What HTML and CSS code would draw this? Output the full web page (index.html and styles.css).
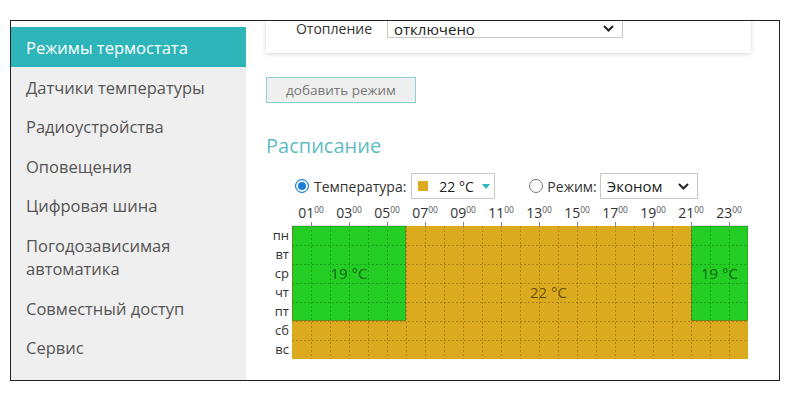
FILE: index.html
```html
<!DOCTYPE html>
<html lang="ru">
<head>
<meta charset="utf-8">
<title>Режимы термостата</title>
<link rel="stylesheet" href="styles.css">
</head>
<body>
<div class="frame">
  <nav class="sidebar">
    <ul class="menu">
      <li class="item active">Режимы термостата</li>
      <li class="item">Датчики температуры</li>
      <li class="item">Радиоустройства</li>
      <li class="item">Оповещения</li>
      <li class="item">Цифровая шина</li>
      <li class="item">Погодозависимая автоматика</li>
      <li class="item">Совместный доступ</li>
      <li class="item">Сервис</li>
    </ul>
  </nav>
  <main class="main">
    <section class="card">
      <span class="field-label">Отопление</span>
      <div class="select select-wide">
        <span>отключено</span>
        <svg class="chev" width="11" height="7" viewBox="0 0 11 7"><path d="M1 1l4.5 4.5L10 1" fill="none" stroke="#222" stroke-width="2"/></svg>
      </div>
    </section>
    <button class="btn" type="button">добавить режим</button>
    <h2 class="title">Расписание</h2>
    <div class="controls">
      <label class="opt"><span class="radio checked"></span>Температура:</label>
      <div class="select select-temp">
        <span class="swatch"></span><span>22 °C</span><span class="caret"></span>
      </div>
      <label class="opt"><span class="radio"></span>Режим:</label>
      <div class="select select-mode">
        <span>Эконом</span>
        <svg class="chev" width="11" height="7" viewBox="0 0 11 7"><path d="M1 1l4.5 4.5L10 1" fill="none" stroke="#222" stroke-width="2"/></svg>
      </div>
    </div>
    <div class="schedule">
      <div class="hours">
        <span class="hour">01<sup>00</sup></span>
        <span class="hour">03<sup>00</sup></span>
        <span class="hour">05<sup>00</sup></span>
        <span class="hour">07<sup>00</sup></span>
        <span class="hour">09<sup>00</sup></span>
        <span class="hour">11<sup>00</sup></span>
        <span class="hour">13<sup>00</sup></span>
        <span class="hour">15<sup>00</sup></span>
        <span class="hour">17<sup>00</sup></span>
        <span class="hour">19<sup>00</sup></span>
        <span class="hour">21<sup>00</sup></span>
        <span class="hour">23<sup>00</sup></span>
      </div>
      <div class="days">
        <span class="day">пн</span>
        <span class="day">вт</span>
        <span class="day">ср</span>
        <span class="day">чт</span>
        <span class="day">пт</span>
        <span class="day">сб</span>
        <span class="day">вс</span>
      </div>
      <svg class="chart" width="456" height="137" viewBox="0 0 456 137">
        <rect x="0" y="4" width="456" height="133" fill="#dbaa1e"/>
        <rect x="0.5" y="4" width="113" height="94.5" fill="#24cd24" stroke="rgba(0,0,0,0.25)"/>
        <rect x="399.5" y="4" width="56.5" height="94.5" fill="#24cd24" stroke="rgba(0,0,0,0.25)"/>
        <path d="M19.5 4V137M38.5 4V137M57.5 4V137M76.5 4V137M95.5 4V137M114.5 4V137M133.5 4V137M152.5 4V137M171.5 4V137M190.5 4V137M209.5 4V137M228.5 4V137M247.5 4V137M266.5 4V137M285.5 4V137M304.5 4V137M323.5 4V137M342.5 4V137M361.5 4V137M380.5 4V137M399.5 4V137M418.5 4V137M437.5 4V137" stroke="rgba(0,0,0,0.22)" stroke-dasharray="2 2" fill="none"/>
        <path d="M0 23.5H456M0 42.5H456M0 61.5H456M0 80.5H456M0 99.5H456M0 118.5H456" stroke="rgba(0,0,0,0.22)" stroke-dasharray="2 2" fill="none"/>
        <path d="M19.5 0V6M57.5 0V6M95.5 0V6M133.5 0V6M171.5 0V6M209.5 0V6M247.5 0V6M285.5 0V6M323.5 0V6M361.5 0V6M399.5 0V6M437.5 0V6" stroke="#888" fill="none"/>
        <text class="cell-text" x="57" y="57">19 °C</text>
        <text class="cell-text" x="256.5" y="76">22 °C</text>
        <text class="cell-text" x="427.5" y="57">19 °C</text>
      </svg>
    </div>
  </main>
</div>
</body>
</html>
```

FILE: styles.css
```css
* { box-sizing: border-box; }

body {
  margin: 0;
  background: #fff;
  font-family: "Open Sans", "Noto Sans", sans-serif;
}

.frame {
  margin: 20px 0 0 10px;
  width: 770px;
  height: 361px;
  border: 1px solid #222;
  display: flex;
  overflow: hidden;
  background: #fff;
}

.sidebar {
  flex: none;
  width: 235px;
  margin-top: 6px;
  background: #efefef;
}

.menu {
  list-style: none;
  margin: 0;
  padding: 0;
}

.item {
  padding: 9px 10px 7px 15px;
  font-size: 16.5px;
  line-height: 23.5px;
  color: #555;
}

.item.active {
  background: #2db5b9;
  color: #fff;
}

.main {
  flex: 1;
  min-width: 0;
  padding-left: 20px;
}

.card {
  margin-top: -21px;
  width: 485px;
  padding: 14px 0 15px;
  background: #fff;
  box-shadow: 0 1px 4px rgba(0, 0, 0, 0.18);
  display: flex;
  align-items: flex-end;
}

.field-label {
  width: 106px;
  margin-right: 15px;
  padding-bottom: 2px;
  text-align: right;
  font-size: 14px;
  line-height: 14px;
  color: #333;
}

.select {
  display: flex;
  align-items: center;
  height: 26px;
  border: 1px solid #c8c8c8;
  background: #fff;
  font-size: 15px;
  color: #222;
  padding: 0 8px 0 6px;
}

.select-wide {
  width: 236px;
  height: 24px;
  padding-top: 5px;
  line-height: 14px;
  justify-content: space-between;
}

.chev { display: block; }

.btn {
  display: block;
  margin-top: 24px;
  width: 150px;
  height: 26px;
  padding: 0;
  border: 1px solid #8fd0d2;
  background: #efefef;
  color: #777;
  font: 13.5px "Open Sans", "Noto Sans", sans-serif;
}

.title {
  margin: 30px 0 0;
  font-size: 20px;
  line-height: 26px;
  font-weight: 400;
  color: #62bcbf;
}

.controls {
  margin-top: 14px;
  height: 26px;
  display: flex;
  align-items: center;
  padding-left: 29px;
  font-size: 14px;
  color: #333;
}

.opt {
  display: flex;
  align-items: center;
}

.radio {
  width: 14px;
  height: 14px;
  border-radius: 50%;
  border: 1px solid #777;
  margin-right: 4px;
  background: #fff;
}

.radio.checked {
  border: 1.5px solid #1a7fd4;
  background: #1a7fd4;
  box-shadow: inset 0 0 0 2px #fff;
  margin-right: 5px;
}

.select-temp {
  width: 84px;
  margin-left: 5px;
  margin-right: 34px;
  padding: 0 4px 0 6px;
  font-size: 14px;
}

.swatch {
  flex: none;
  width: 10px;
  height: 10px;
  background: #dbaa1e;
  margin-right: 11px;
}

.caret {
  flex: none;
  margin-left: auto;
  border-top: 5px solid #2db5b9;
  border-left: 4px solid transparent;
  border-right: 4px solid transparent;
}

.select-mode {
  width: 98px;
  margin-left: 3px;
  justify-content: space-between;
}

.schedule {
  margin-top: 5px;
  display: grid;
  grid-template-columns: 26px 456px;
}

.hours {
  grid-column: 2;
  grid-row: 1;
  display: flex;
  height: 18px;
}

.hour {
  width: 38px;
  text-align: center;
  font-size: 14px;
  line-height: 18px;
  color: #333;
  white-space: nowrap;
}

.hour sup {
  font-size: 8.5px;
  line-height: 8px;
  vertical-align: 5px;
  color: #555;
}

.days {
  grid-column: 1;
  grid-row: 2;
  padding: 4px 3px 0 0;
  display: flex;
  flex-direction: column;
  align-items: flex-end;
}

.day {
  height: 19px;
  line-height: 19px;
  font-size: 13px;
  color: #333;
}

.chart {
  grid-column: 2;
  grid-row: 2;
  display: block;
}

.cell-text {
  font-family: "Open Sans", "Noto Sans", sans-serif;
  font-size: 15px;
  fill: rgba(0, 0, 0, 0.55);
  text-anchor: middle;
}
```
